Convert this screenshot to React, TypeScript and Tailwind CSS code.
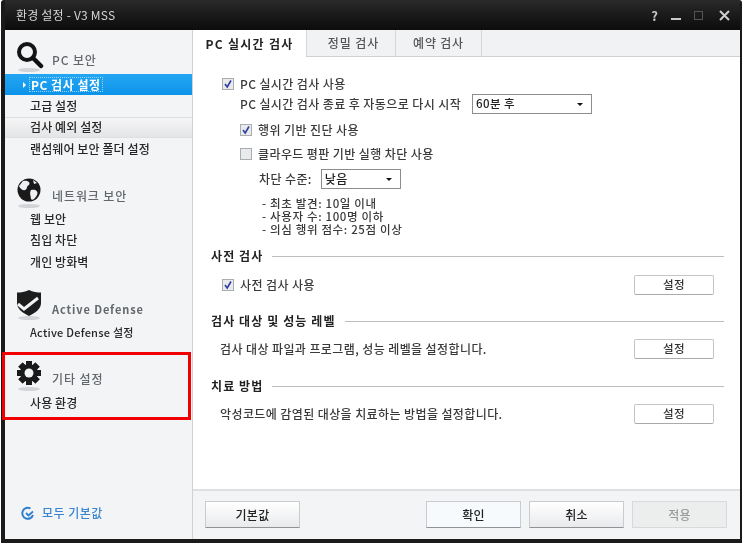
import React from "react";

const font = { fontFamily: '"Noto Sans CJK KR", "Liberation Sans", sans-serif' };

function Reflection() {
  return <ellipse cx="15" cy="29" rx="11" ry="2" fill="#c9ccd0" opacity="0.8" />;
}

function Magnifier() {
  return (
    <svg width="30" height="32" viewBox="0 0 30 32">
      <Reflection />
      <circle cx="13" cy="11" r="8" fill="#f4f5f7" stroke="#151515" strokeWidth="4" />
      <path d="M19 17 L27 25" stroke="#111" strokeWidth="4.5" strokeLinecap="round" />
    </svg>
  );
}

function Globe() {
  return (
    <svg width="30" height="32" viewBox="0 0 30 32">
      <Reflection />
      <circle cx="15" cy="13" r="11.5" fill="#1a1a1a" />
      <path d="M9 4 C13 3 17 5 15 8 C12 9 14 12 11 13 C8 14 6 11 5 9 Z M17 13 C21 12 25 14 23 18 C21 22 18 24 17 22 C17 19 15 16 17 13 Z M19 3 L23 6 L20 7 Z" fill="#eef0f2" />
    </svg>
  );
}

function Shield() {
  return (
    <svg width="30" height="32" viewBox="0 0 30 32">
      <Reflection />
      <path d="M15 1 C19 3 23 3.5 27 3.5 L27 14 C27 20 21 24 15 27 C9 24 3 20 3 14 L3 3.5 C7 3.5 11 3 15 1 Z" fill="#1d1d1d" />
      <path d="M4 15 L10 20 L24 9" fill="none" stroke="#f2f3f5" strokeWidth="3" />
    </svg>
  );
}

function Gear() {
  const teeth = [0, 45, 90, 135, 180, 225, 270, 315];
  return (
    <svg width="30" height="32" viewBox="0 0 30 32">
      <Reflection />
      {teeth.map((a) => (
        <rect key={a} x="12" y="1" width="6" height="24" fill="#1a1a1a" transform={`rotate(${a} 15 13)`} />
      ))}
      <circle cx="15" cy="13" r="9" fill="#1a1a1a" />
      <circle cx="15" cy="13" r="4.5" fill="#f3f4f6" />
    </svg>
  );
}

function SideHeader({ icon, label, bold }: { icon: React.ReactNode; label: string; bold?: boolean }) {
  return (
    <div className="flex h-[32px] items-start pl-[9px]">
      {icon}
      <span className={`ml-[8px] leading-[16px] text-[#63676b] ${bold ? "mt-[12px] text-[11px] font-bold tracking-[0.9px]" : "mt-[11px] text-[12px] font-medium tracking-[0.9px]"}`}>
        {label}
      </span>
    </div>
  );
}

function SideItem({ children, className = "" }: { children: React.ReactNode; className?: string }) {
  return (
    <div className={`flex h-[21.4px] items-center pl-[25px] text-[12px] font-medium tracking-[0.1px] text-[#262626] ${className}`}>
      {children}
    </div>
  );
}

function Check({ on = true }: { on?: boolean }) {
  return (
    <span className="mr-[6px] flex h-[12px] w-[12px] shrink-0 items-center justify-center border border-[#a9acb0] bg-[#e9eaec]">
      {on && (
        <svg width="10" height="10" viewBox="0 0 10 10">
          <path d="M2 5 L4.2 8 L8 1.5" fill="none" stroke="#2f3f9e" strokeWidth="1.6" />
        </svg>
      )}
    </span>
  );
}

function Caret() {
  return <span className="h-0 w-0 border-x-[3px] border-t-[3px] border-x-transparent border-t-[#111]" />;
}

function Select({ label, className }: { label: string; className: string }) {
  return (
    <div className={`flex h-[20px] items-center justify-between border border-[#8d8d8d] bg-white pl-[3px] pr-[8px] text-[#222] ${className}`}>
      <span>{label}</span>
      <Caret />
    </div>
  );
}

function SetBtn({ className = "" }: { className?: string }) {
  return (
    <button className={`h-[20px] w-[80px] rounded-[2px] border border-[#c3c5c8] border-b-[#a8abae] bg-white text-[11.5px] font-medium tracking-[0.3px] text-[#333] ${className}`}>
      설정
    </button>
  );
}

function Heading({ children, className = "" }: { children: React.ReactNode; className?: string }) {
  return (
    <div className={`flex h-[20px] items-center text-[12px] font-bold tracking-[1.1px] text-[#222] ${className}`}>
      <span className="mr-[9px] shrink-0">{children}</span>
      <span className="h-px flex-1 bg-[#bdbdbd]" />
    </div>
  );
}

function FootBtn({ children, className = "" }: { children: React.ReactNode; className?: string }) {
  return (
    <button className={`h-[27px] w-[95px] rounded-[1px] border border-[#c9cbce] border-b-[#8f9296] bg-gradient-to-b from-white to-[#e9eaec] text-[12px] font-medium tracking-[0.3px] text-[#222] ${className}`}>
      {children}
    </button>
  );
}

export default function App() {
  return (
    <div className="h-[544px] w-[743px] bg-white pl-px blur-[0.45px]" style={font}>
      <div className="relative flex h-[543px] w-[741px] flex-col rounded-t-[3px] border-b-[4px] border-l-[4px] border-r-[2px] border-[#1a1a1a]">
        <div className="flex h-[30px] shrink-0 items-center justify-between bg-gradient-to-b from-[#2a2a2a] to-[#0c0c0c] pl-[11px] pr-[10px]">
          <span className="text-[12px] tracking-[0.2px] text-[#d5d5d5]">환경 설정 - V3 MSS</span>
          <div className="flex items-center gap-[13px] text-[#bdbdbd]">
            <span className="text-[13px] font-bold leading-none text-[#c8c8c8]">?</span>
            <span className="mt-[8px] h-[2px] w-[10px] bg-[#c8c8c8]" />
            <span className="h-[9px] w-[9px] border-[1.5px] border-[#555]" />
            <svg width="11" height="11" viewBox="0 0 11 11" className="ml-[3px]">
              <path d="M1 1 L10 10 M10 1 L1 10" stroke="#cfcfcf" strokeWidth="2" />
            </svg>
          </div>
        </div>

        <div className="flex min-h-0 flex-1">
          <aside className="flex w-[188px] shrink-0 flex-col border-r border-[#cfd1d3] bg-[#f3f4f6]">
            <div className="mt-[11px]">
              <SideHeader icon={<Magnifier />} label="PC 보안" />
            </div>
            <div className="mt-[1px]">
              <div className="relative flex h-[21.4px] items-center bg-gradient-to-b from-[#23a6f2] to-[#0a93ea] pl-[25px] text-[12px] font-bold tracking-[0.5px] text-white">
                <span className="absolute left-[18px] h-0 w-0 border-y-[3px] border-l-[3px] border-y-transparent border-l-white" />
                <span className="-ml-px border border-dotted border-[#9ad3f5] px-px leading-[13px]">PC 검사 설정</span>
              </div>
              <SideItem>고급 설정</SideItem>
              <SideItem className="border-y border-[#dddfe1] bg-gradient-to-b from-[#f5f5f6] to-[#e4e5e7]">검사 예외 설정</SideItem>
              <SideItem>랜섬웨어 보안 폴더 설정</SideItem>
            </div>
            <div className="mt-[17px]">
              <SideHeader icon={<Globe />} label="네트워크 보안" />
            </div>
            <div className="-mt-[0.5px]">
              <SideItem>웹 보안</SideItem>
              <SideItem>침입 차단</SideItem>
              <SideItem>개인 방화벽</SideItem>
            </div>
            <div className="mt-[17px]">
              <SideHeader icon={<Shield />} label="Active Defense" bold />
            </div>
            <div>
              <SideItem className="!text-[11px] tracking-[0.25px]">Active Defense 설정</SideItem>
            </div>
            <div className="mt-[17px]">
              <SideHeader icon={<Gear />} label="기타 설정" />
            </div>
            <div className="mt-px">
              <SideItem>사용 환경</SideItem>
            </div>
            <div className="mt-auto mb-[17px] flex items-center pl-[15px] text-[12px] font-medium tracking-[0.5px] text-[#3b84d0]">
              <svg width="16" height="16" viewBox="0 0 16 16" className="mr-[6px]">
                <path d="M10.5 3.5 A5.5 5.5 0 1 0 13 10" fill="none" stroke="#2f7fd0" strokeWidth="2" />
                <path d="M6 8 L8.5 10.5 L13 6.5" fill="none" stroke="#2f7fd0" strokeWidth="1.8" />
              </svg>
              모두 기본값
            </div>
          </aside>

          <main className="flex min-w-0 flex-1 flex-col bg-white">
            <div className="flex h-[27px] shrink-0 items-stretch border-b border-[#cfd1d3] bg-[#f1f2f4]">
              <div className="relative z-10 -mb-px flex w-[113px] items-center justify-center bg-white text-[12px] font-bold tracking-[1.3px] text-[#222]">
                PC 실시간 검사
              </div>
              <div className="flex w-[90px] items-center justify-center border-l border-r border-[#d5d7d9] pl-[5px] text-[12px] font-medium tracking-[0.9px] text-[#555]">
                정밀 검사
              </div>
              <div className="flex w-[86px] items-center justify-center border-r border-[#d5d7d9] text-[12px] font-medium tracking-[0.8px] text-[#555]">
                예약 검사
              </div>
            </div>

            <div className="min-h-0 flex-1 pl-[18px] pr-[16px] text-[12px] font-medium tracking-[0.4px] text-[#3a3a3a]">
              <div className="ml-[11px] mt-[17px] flex h-[20px] items-center">
                <Check />
                PC 실시간 검사 사용
              </div>
              <div className="ml-[29px] flex h-[20px] items-center">
                PC 실시간 검사 종료 후 자동으로 다시 시작
                <Select label="60분 후" className="ml-[11px] w-[120px] text-[11.5px]" />
              </div>
              <div className="ml-[29px] mt-[6px] flex h-[20px] items-center">
                <Check />
                행위 기반 진단 사용
              </div>
              <div className="ml-[29px] mt-[4px] flex h-[20px] items-center">
                <Check on={false} />
                클라우드 평판 기반 실행 차단 사용
              </div>
              <div className="ml-[48px] mt-[5px] flex h-[20px] items-center">
                차단 수준:
                <Select label="낮음" className="ml-[9px] w-[80px] text-[12px]" />
              </div>
              <div className="ml-[51px] mt-[8px] text-[11.5px] leading-[13px] tracking-[0.65px]">
                <div>- 최초 발견: 10일 이내</div>
                <div>- 사용자 수: 100명 이하</div>
                <div>- 의심 행위 점수: 25점 이상</div>
              </div>

              <Heading className="mt-[10px]">사전 검사</Heading>
              <div className="ml-[11px] mt-[9px] flex h-[20px] items-center pr-[10px]">
                <Check />
                사전 검사 사용
                <SetBtn className="ml-auto" />
              </div>

              <Heading className="mt-[16px]">검사 대상 및 성능 레벨</Heading>
              <div className="ml-[9px] mt-[8px] flex h-[20px] items-center pr-[10px]">
                검사 대상 파일과 프로그램, 성능 레벨을 설정합니다.
                <SetBtn className="ml-auto" />
              </div>

              <Heading className="mt-[17px]">치료 방법</Heading>
              <div className="ml-[9px] mt-[7px] flex h-[21px] items-center pr-[10px]">
                악성코드에 감염된 대상을 치료하는 방법을 설정합니다.
                <SetBtn className="ml-auto" />
              </div>
            </div>

            <div className="flex h-[50px] shrink-0 items-start border-t-2 border-[#dfe0e2] bg-[#f3f4f6] pl-[12px] pt-[10px]">
              <FootBtn>기본값</FootBtn>
              <FootBtn className="ml-[126px] border-[#9cc8e6] border-b-[#7fb0d2] bg-none bg-[#f7fafc] font-bold">확인</FootBtn>
              <FootBtn className="ml-[8px]">취소</FootBtn>
              <button className="ml-[8px] h-[27px] w-[95px] border border-[#d8d9db] bg-[#eceded] text-[12px] font-medium tracking-[0.3px] text-[#9a9a9a]">
                적용
              </button>
            </div>
          </main>
        </div>

        <div className="pointer-events-none absolute left-[-3px] top-[352px] h-[68px] w-[189px] border-[3px] border-[#f00000]" />
      </div>
    </div>
  );
}
